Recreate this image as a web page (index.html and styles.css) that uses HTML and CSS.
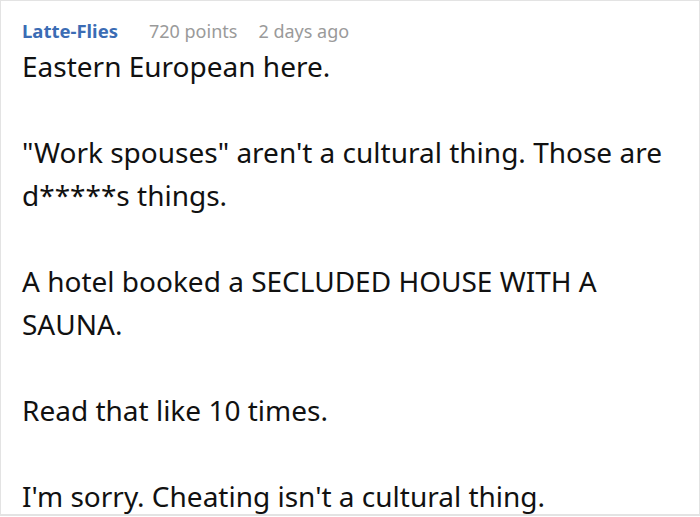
FILE: index.html
```html
<!DOCTYPE html>
<html>
<head>
<meta charset="utf-8">
<link rel="stylesheet" href="styles.css">
</head>
<body>
<div class="card">
  <div class="meta">
    <span class="author">Latte-Flies</span>
    <span class="points">720 points</span>
    <span class="time">2 days ago</span>
  </div>
  <div class="body">
    <p>Eastern European here.</p>
    <p>"Work spouses" aren't a cultural thing. Those are d*****s things.</p>
    <p>A hotel booked a SECLUDED HOUSE WITH A SAUNA.</p>
    <p>Read that like 10 times.</p>
    <p>I'm sorry. Cheating isn't a cultural thing.</p>
  </div>
</div>
</body>
</html>
```
FILE: styles.css
```css
html, body {
  margin: 0;
  padding: 0;
  background: #ffffff;
}
.card {
  box-sizing: border-box;
  width: 700px;
  height: 516px;
  border: 1px solid #e3e3e3;
  border-bottom-width: 2px;
  padding: 16px 20px 0 21px;
  font-family: "Noto Sans", sans-serif;
  overflow: hidden;
}
.meta {
  display: flex;
  align-items: baseline;
  font-size: 18px;
  line-height: 28px;
}
.author {
  color: #3b6cb4;
  font-weight: 700;
  font-size: 18.5px;
  margin-right: 31px;
}
.points {
  color: #9a9a9a;
  margin-right: 21px;
}
.time {
  color: #9a9a9a;
}
.body {
  font-size: 28px;
  line-height: 43px;
  color: #111111;
}
.body p {
  margin: 0 0 43px 0;
}
```
